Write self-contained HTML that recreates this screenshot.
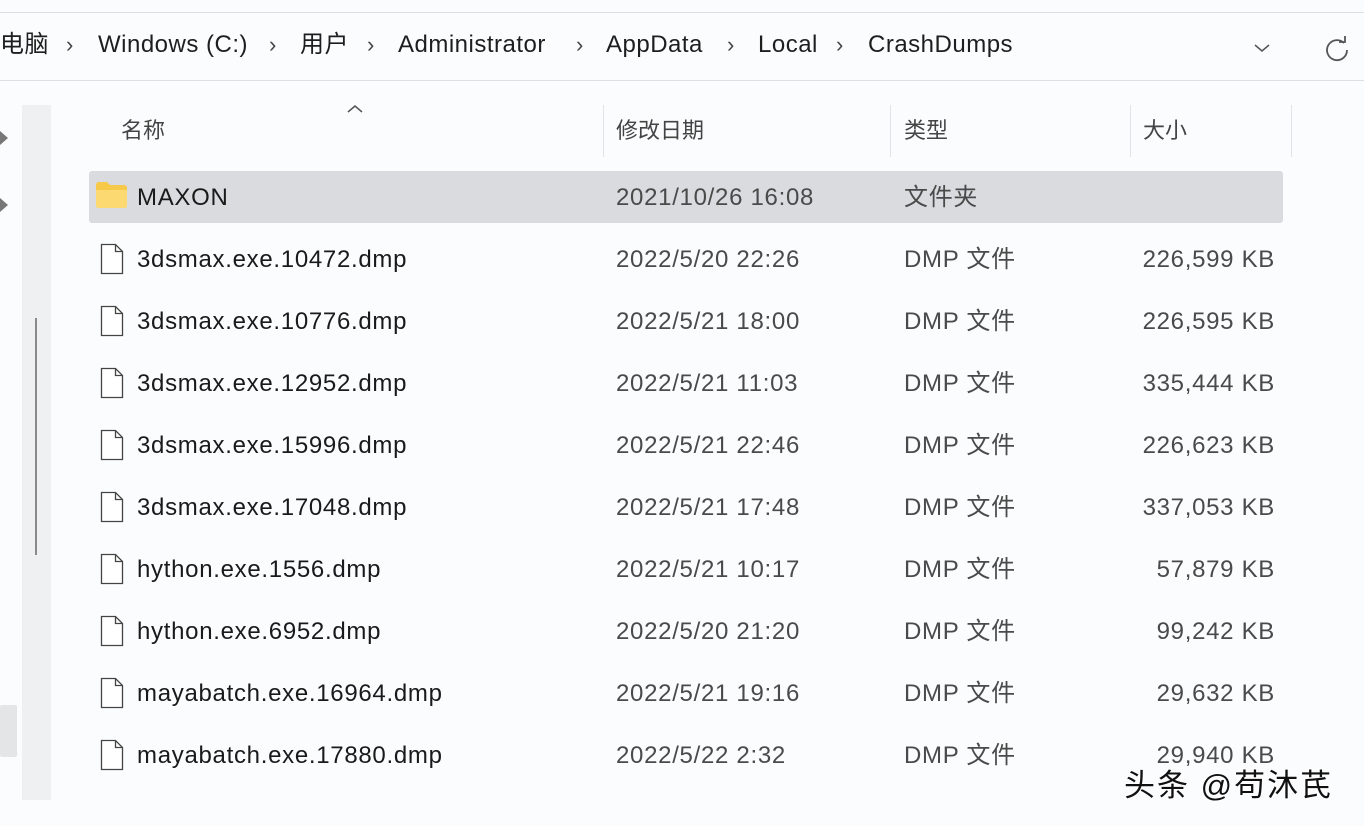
<!DOCTYPE html>
<html><head><meta charset="utf-8"><style>
*{margin:0;padding:0;box-sizing:border-box}
body{width:1364px;height:826px;background:#fbfcfd;position:relative;overflow:hidden;font-family:"Liberation Sans","Noto Sans CJK SC",sans-serif;color:#1c1c1c}
.top{position:absolute;left:0;top:12px;width:1364px;height:69px;background:#fbfcfd;border-top:1px solid #dcdfe3;border-bottom:1px solid #dcdfe3}
.crumb{position:absolute;top:30px;height:30px;line-height:30px;font-size:24px;color:#1e1e1e;white-space:nowrap;letter-spacing:0.5px}
.sep{position:absolute;top:30px;line-height:30px;font-size:22px;color:#444}
.strip{position:absolute;left:22px;top:105px;width:29px;height:695px;background:#eff0f2}
.thumb{position:absolute;left:35px;top:318px;width:2px;height:237px;background:#8a8a8a}
.hdr{position:absolute;top:116px;line-height:30px;font-size:22px;color:#444}
.div{position:absolute;top:105px;width:1px;height:52px;background:#e2e4e7}
.sel{position:absolute;left:89px;top:171px;width:1194px;height:52px;background:#d9dbde;border-radius:3px}
.row{position:absolute;left:0;width:1364px;height:30px;font-size:24px;letter-spacing:0.7px}
.row span{position:absolute;top:0;white-space:nowrap;line-height:30px}
.n{left:137px;color:#1a1a1a}.d{left:616px;color:#4a4a4a}.t{left:904px;color:#4a4a4a}.s{right:89px;color:#4a4a4a}
.fi{position:absolute;left:100px;width:24px;height:32px}
.wm{position:absolute;left:1124px;top:768px;line-height:36px;font-size:31px;color:#111;letter-spacing:2px;text-shadow:1px 1px 0 #fff,-1px -1px 0 #fff}
</style></head><body>
<div class="top"></div>
<span class="crumb" style="left:0">电脑</span><span class="sep" style="left:66px">›</span>
<span class="crumb" style="left:98px">Windows (C:)</span><span class="sep" style="left:269px">›</span>
<span class="crumb" style="left:300px">用户</span><span class="sep" style="left:367px">›</span>
<span class="crumb" style="left:398px">Administrator</span><span class="sep" style="left:576px">›</span>
<span class="crumb" style="left:606px">AppData</span><span class="sep" style="left:727px">›</span>
<span class="crumb" style="left:758px">Local</span><span class="sep" style="left:836px">›</span>
<span class="crumb" style="left:868px">CrashDumps</span>
<svg style="position:absolute;left:1252px;top:42px" width="20" height="12"><path d="M3 3l7 6 7-6" fill="none" stroke="#555" stroke-width="1.5"/></svg>
<svg style="position:absolute;left:1322px;top:34px" width="30" height="30"><path d="M22 9A10 10 0 1 0 25 16" fill="none" stroke="#555" stroke-width="1.8"/><path d="M17 8h6V2" fill="none" stroke="#555" stroke-width="1.8"/></svg>
<svg style="position:absolute;left:0;top:128px" width="14" height="90"><path d="M0 3l8 7-8 7z M0 70l8 7-8 7z" fill="#777"/></svg>
<div style="position:absolute;left:0;top:705px;width:17px;height:52px;background:#e4e5e7;border-radius:2px"></div>
<div class="strip"></div><div class="thumb"></div>
<svg style="position:absolute;left:346px;top:103px" width="18" height="12"><path d="M2 9l7-6 7 6" fill="none" stroke="#555" stroke-width="1.5"/></svg>
<span class="hdr" style="left:121px">名称</span>
<span class="hdr" style="left:616px">修改日期</span>
<span class="hdr" style="left:904px">类型</span>
<span class="hdr" style="left:1143px">大小</span>
<div class="div" style="left:603px"></div><div class="div" style="left:890px"></div><div class="div" style="left:1130px"></div><div class="div" style="left:1291px"></div>
<div class="sel"></div>
<svg style="position:absolute;left:95px;top:181px" width="34" height="28"><path d="M1 4q0-3 3-3h8l3 3h14q3 0 3 3v17q0 3-3 3H4q-3 0-3-3z" fill="#f7c948"/><path d="M1 9h31v15q0 3-3 3H4q-3 0-3-3z" fill="#fcd971"/></svg>
<div class="row" style="top:183px"><span class="n">MAXON</span><span class="d">2021/10/26 16:08</span><span class="t">文件夹</span></div>
<div id="rows"></div>
<script>
var r=[["3dsmax.exe.10472.dmp","2022/5/20 22:26","226,599 KB"],["3dsmax.exe.10776.dmp","2022/5/21 18:00","226,595 KB"],["3dsmax.exe.12952.dmp","2022/5/21 11:03","335,444 KB"],["3dsmax.exe.15996.dmp","2022/5/21 22:46","226,623 KB"],["3dsmax.exe.17048.dmp","2022/5/21 17:48","337,053 KB"],["hython.exe.1556.dmp","2022/5/21 10:17","57,879 KB"],["hython.exe.6952.dmp","2022/5/20 21:20","99,242 KB"],["mayabatch.exe.16964.dmp","2022/5/21 19:16","29,632 KB"],["mayabatch.exe.17880.dmp","2022/5/22 2:32","29,940 KB"]];
var h="";r.forEach(function(x,i){var y=245+62*i;h+='<svg class="fi" style="top:'+(y-2)+'px" viewBox="0 0 24 32"><path d="M1.5 1.5h14l7 7v22h-21z" fill="#fff" stroke="#444" stroke-width="1.3"/><path d="M15.5 1.5v7h7" fill="none" stroke="#444" stroke-width="1.3"/></svg><div class="row" style="top:'+y+'px"><span class="n">'+x[0]+'</span><span class="d">'+x[1]+'</span><span class="t">DMP 文件</span><span class="s">'+x[2]+'</span></div>';});
document.getElementById("rows").innerHTML=h;
</script>
<div class="wm">头条 @苟沐芪</div>
</body></html>
